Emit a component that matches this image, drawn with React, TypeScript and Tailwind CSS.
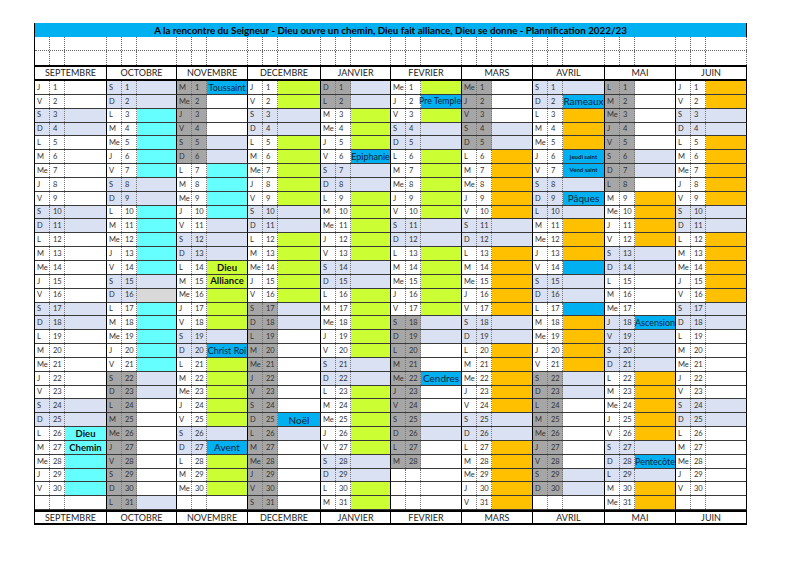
import React from "react";

type Month = { name: string; w: string; y: number; m: number; ev: string };

const MONTHS: Month[] = [
  { name: "SEPTEMBRE", w: "w-[72px]", y: 2022, m: 8, ev: "wwbbwwwwwbbwwwwwbbwwwwwbbcccccx" },
  { name: "OCTOBRE", w: "w-[70px]", y: 2022, m: 9, ev: "bbcccccbbcccccbgcccccbbwwwwwwwb" },
  { name: "NOVEMBRE", w: "w-[71px]", y: 2022, m: 10, ev: "BwwwbbccccbbblllllbBlllllbBlllx" },
  { name: "DECEMBRE", w: "w-[73px]", y: 2022, m: 11, ev: "llbblllllbblllllbbwwwwwwBbwwwww" },
  { name: "JANVIER", w: "w-[70px]", y: 2023, m: 0, ev: "bblllBbblllllbblllllbblllllbbll" },
  { name: "FEVRIER", w: "w-[71px]", y: 2023, m: 1, ev: "lBlbblllllbblllllbbwwBwwbbwwxxx" },
  { name: "MARS", w: "w-[71px]", y: 2023, m: 2, ev: "wwwbbooooobbooooobbooooobbooooo" },
  { name: "AVRIL", w: "w-[72px]", y: 2023, m: 3, ev: "bBoooBBbBboooBbbBoooobbwwwwwbbx" },
  { name: "MAI", w: "w-[71px]", y: 2023, m: 4, ev: "wwwwwbbwoooobbwwwBbbbooooobBboo" },
  { name: "JUIN", w: "w-[71px]", y: 2023, m: 5, ev: "oobbooooobbooooobbwwwwwbbwwwwwx" },
];

const GRAY: Record<number, [number, number]> = {
  1: [22, 31],
  2: [1, 6],
  3: [17, 31],
  4: [1, 2],
  5: [18, 28],
  6: [1, 5],
  7: [22, 30],
  8: [1, 8],
};
const EXTRA_BLUE: Record<number, number[]> = { 7: [10], 8: [18, 19, 29] };

type LabelStyle = "n" | "bold" | "big" | "tiny" | "wide";
const LABELS: Record<string, [string, LabelStyle]> = {
  "0-26": ["Dieu", "bold"],
  "0-27": ["Chemin", "bold"],
  "2-1": ["Toussaint", "n"],
  "2-14": ["Dieu", "bold"],
  "2-15": ["Alliance", "bold"],
  "2-20": ["Christ Roi", "n"],
  "2-27": ["Avent", "big"],
  "3-25": ["Noël", "big"],
  "4-6": ["Epiphanie", "n"],
  "5-2": ["Pre Temple", "wide"],
  "5-22": ["Cendres", "big"],
  "7-2": ["Rameaux", "big"],
  "7-6": ["jeudi saint", "tiny"],
  "7-7": ["Vend saint", "tiny"],
  "7-9": ["Pâques", "big"],
  "8-18": ["Ascension", "n"],
  "8-28": ["Pentecôte", "n"],
};

const DAY_LETTERS = ["D", "L", "M", "Me", "J", "V", "S"];

const EV_BG: Record<string, string> = {
  w: "bg-white",
  x: "bg-white",
  b: "bg-[#D9E1F2]",
  c: "bg-[#66FFFF]",
  l: "bg-[#CCFF33]",
  o: "bg-[#FFC000]",
  g: "bg-[#D9D9D9]",
  B: "bg-[#00B0F0]",
};

const LABEL_CLS: Record<LabelStyle, string> = {
  n: "text-[9px] text-[#10233d]",
  bold: "text-[9.5px] font-bold text-[#111]",
  big: "text-[10px] text-[#10233d]",
  tiny: "text-[6px] font-bold text-[#10233d]",
  wide: "text-[8.7px] text-[#10233d]",
};

function daysIn(y: number, m: number) {
  return new Date(y, m + 1, 0).getDate();
}

function DayCell({ mi, day }: { mi: number; day: number }) {
  const mo = MONTHS[mi];
  const exists = day <= daysIn(mo.y, mo.m);
  let letter = "";
  let cellBg = "bg-white";
  if (exists) {
    const dow = new Date(mo.y, mo.m, day).getDay();
    letter = DAY_LETTERS[dow];
    const g = GRAY[mi];
    if (g && day >= g[0] && day <= g[1]) cellBg = "bg-[#A6A6A6]";
    else if (dow === 0 || dow === 6 || (EXTRA_BLUE[mi] || []).includes(day)) cellBg = "bg-[#D9E1F2]";
  }
  const ev = mo.ev[day - 1];
  const label = LABELS[`${mi}-${day}`];
  const justify = label && label[1] === "wide" ? "justify-end" : "justify-center";
  return (
    <div className={`${mo.w} flex border-r border-b border-r-black border-b-[#3a3a3a]`}>
      <div className={`w-[15px] shrink-0 flex items-center pl-[2px] text-[7.5px] text-[#333] border-r border-dotted border-[#777] ${cellBg}`}>
        {letter}
      </div>
      <div className={`w-[15px] shrink-0 flex items-center pl-[3px] text-[7.5px] text-[#333] border-r border-dotted border-[#777] ${cellBg}`}>
        {exists ? day : ""}
      </div>
      <div className={`flex-1 min-w-0 flex items-center ${justify} whitespace-nowrap leading-none ${EV_BG[ev]}`}>
        {label ? <span className={`shrink-0 ${LABEL_CLS[label[1]]}`}>{label[0]}</span> : null}
      </div>
    </div>
  );
}

function BlankRow({ last }: { last?: boolean }) {
  return (
    <div className={`flex h-[14px] ${last ? "" : "border-b border-dotted border-[#666]"}`}>
      {MONTHS.map((m, i) => (
        <div key={i} className={`${m.w} flex border-r border-dotted border-[#666]`}>
          <div className="w-[15px] border-r border-dotted border-[#666]" />
          <div className="w-[15px] border-r border-dotted border-[#666]" />
          <div className="flex-1" />
        </div>
      ))}
    </div>
  );
}

function HeaderRow({ h }: { h: string }) {
  return (
    <div className={`flex ${h} border-y-2 border-black`}>
      {MONTHS.map((m, i) => (
        <div key={i} className={`${m.w} flex items-center justify-center border-r border-black text-[9px] text-[#222]`}>
          {m.name}
        </div>
      ))}
    </div>
  );
}

export default function App() {
  const days = Array.from({ length: 31 }, (_, i) => i + 1);
  return (
    <div className="w-[800px] h-[566px] bg-white pt-[23px] pl-[34px] font-['Lato',sans-serif]">
      <div className="w-[713px] border-l border-black">
        <div className="h-[14px] bg-[#00B0F0] border-r border-black flex items-center justify-center text-[9.8px] font-bold text-black whitespace-nowrap">
          A la rencontre du Seigneur - Dieu ouvre un chemin, Dieu fait alliance, Dieu se donne - Plannification 2022/23
        </div>
        <BlankRow />
        <BlankRow last />
        <HeaderRow h="h-[16px]" />
        <div className="flex flex-col h-[429px]">
          {days.map((d) => (
            <div key={d} className="flex flex-1 min-h-0">
              {MONTHS.map((_, mi) => (
                <DayCell key={mi} mi={mi} day={d} />
              ))}
            </div>
          ))}
        </div>
        <HeaderRow h="h-[15px]" />
      </div>
    </div>
  );
}
